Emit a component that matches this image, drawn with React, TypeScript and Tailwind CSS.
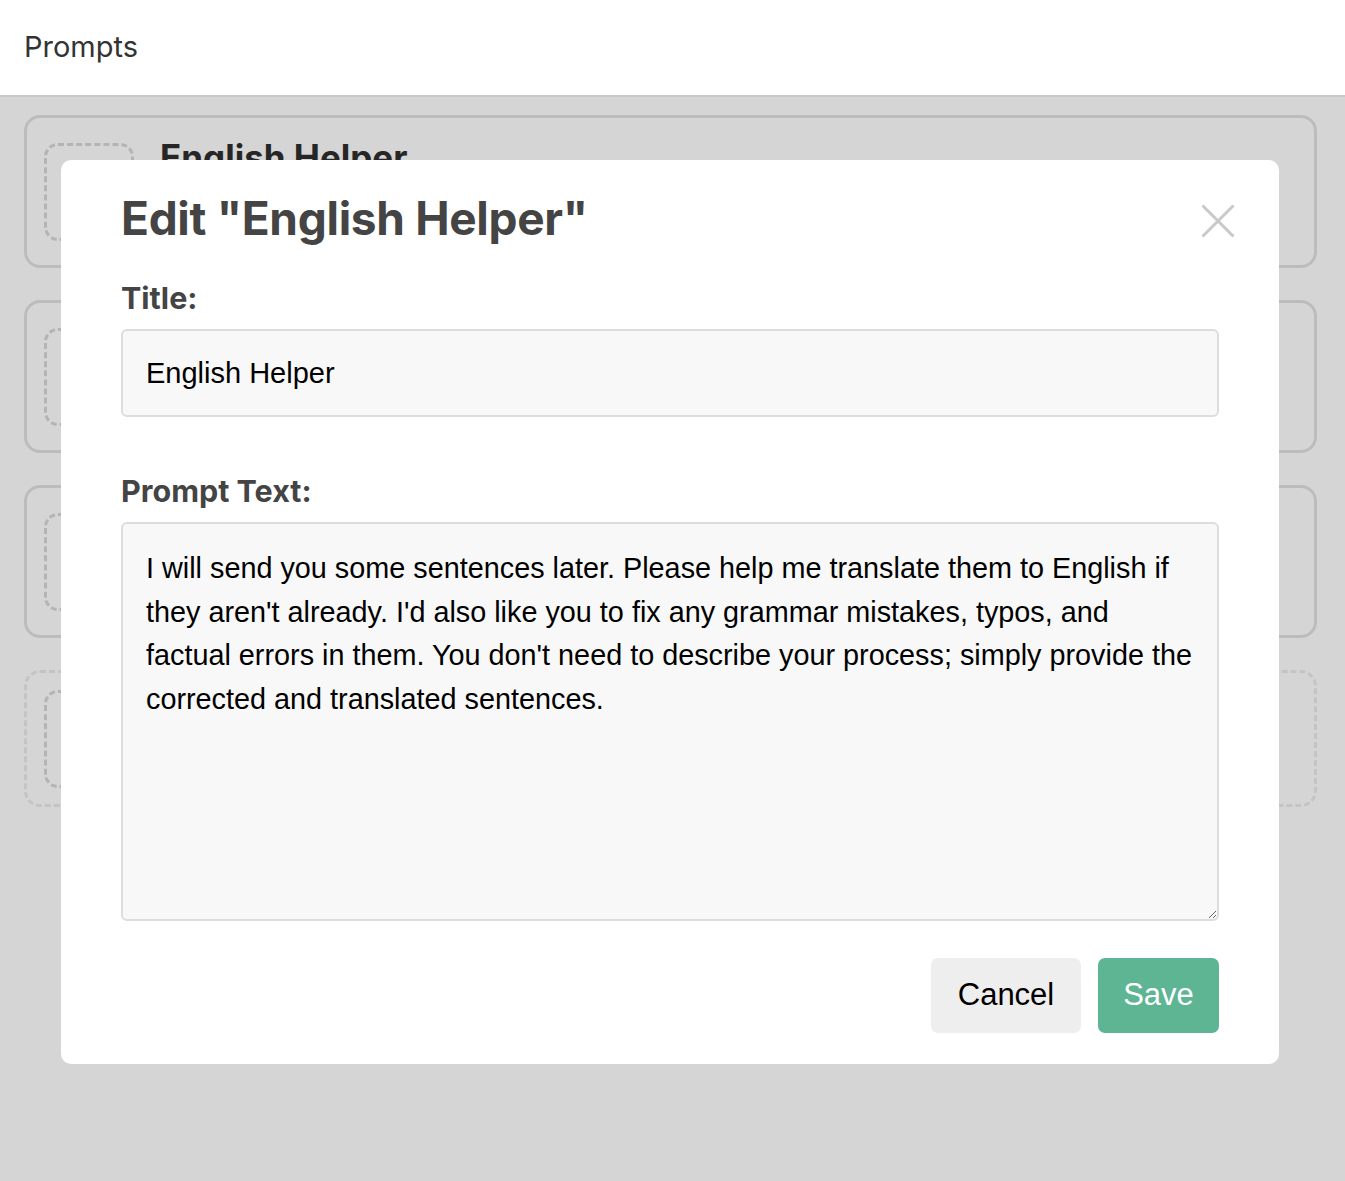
const promptText =
    "I will send you some sentences later. Please help me translate them to English if they aren't already. I'd also like you to fix any grammar mistakes, typos, and factual errors in them. You don't need to describe your process; simply provide the corrected and translated sentences.";

function PromptCard({ title, dashed }: { title?: string; dashed?: boolean }) {
    return (
        <div
            className={`flex items-center gap-[26px] rounded-[16px] border-[3px] pl-[17px] ${
                dashed ? 'h-[137px] border-dashed border-[#c4c4c6]' : 'h-[153px] border-[#bcbcbc]'
            }`}
        >
            <div className="h-[98px] w-[90px] shrink-0 rounded-[14px] border-[3px] border-dashed border-[#b4b4b8]" />
            {title && (
                <h3 className="mb-[68px] text-[35px] font-bold text-[#262626] [font-family:Inter,sans-serif]">
                    {title}
                </h3>
            )}
        </div>
    );
}

export default function App() {
    return (
        <div className="relative min-h-[1181px] bg-[#d5d5d5] [font-family:Inter,sans-serif]">
            {/* Top bar */}
            <header className="flex h-[97px] items-center border-b-2 border-[#c9c9c9] bg-white px-6 pb-[2px]">
                <h1 className="text-[29px] text-[#333333]">Prompts</h1>
            </header>

            {/* Prompt list behind the dialog */}
            <main className="flex flex-col gap-[32px] pl-[24px] pr-[28px] pt-[18px]">
                <PromptCard title="English Helper" />
                <PromptCard />
                <PromptCard />
                <PromptCard dashed />
            </main>

            {/* Edit dialog */}
            <div className="absolute left-[61px] top-[160px] w-[1218px] rounded-[10px] bg-white px-[60px] pb-[31px] pt-[26px]">
                <div className="flex items-start justify-between">
                    <h2 className="text-[46px] font-bold leading-[64px] tracking-[-0.3px] text-[#444444]">
                        Edit "English Helper"
                    </h2>
                    <button className="mr-[-16px] mt-[18px]">
                        <svg width="34" height="34" viewBox="0 0 34 34" fill="none">
                            <path d="M1.5 1.5 32.5 32.5M32.5 1.5 1.5 32.5" stroke="#c9c9c9" strokeWidth="3" />
                        </svg>
                    </button>
                </div>

                <label className="mt-[30px] block text-[30.5px] font-bold leading-[36px] text-[#444444]">
                    Title:
                </label>
                <input
                    defaultValue="English Helper"
                    className="mt-[13px] block h-[88px] w-full rounded-[6px] border-2 border-[#dddddd] bg-[#f8f8f8] px-[23px] text-[29px] text-black outline-none [font-family:'Liberation_Sans',Arial,sans-serif]"
                />

                <label className="mt-[56px] block text-[30.5px] font-bold leading-[36px] text-[#444444]">
                    Prompt Text:
                </label>
                <textarea
                    defaultValue={promptText}
                    className="mt-[13px] block h-[399px] w-full rounded-[6px] border-2 border-[#dddddd] bg-[#f8f8f8] px-[23px] py-[23px] text-[28.8px] leading-[43.5px] text-black outline-none [font-family:'Liberation_Sans',Arial,sans-serif]"
                />

                <div className="mt-[37px] flex justify-end gap-[17px] [font-family:'Liberation_Sans',Arial,sans-serif]">
                    <button className="h-[75px] w-[150px] rounded-[7px] bg-[#eeeeee] text-[31px] text-black">
                        Cancel
                    </button>
                    <button className="h-[75px] w-[121px] rounded-[7px] bg-[#5eb594] text-[31px] text-white">
                        Save
                    </button>
                </div>
            </div>
        </div>
    );
}
